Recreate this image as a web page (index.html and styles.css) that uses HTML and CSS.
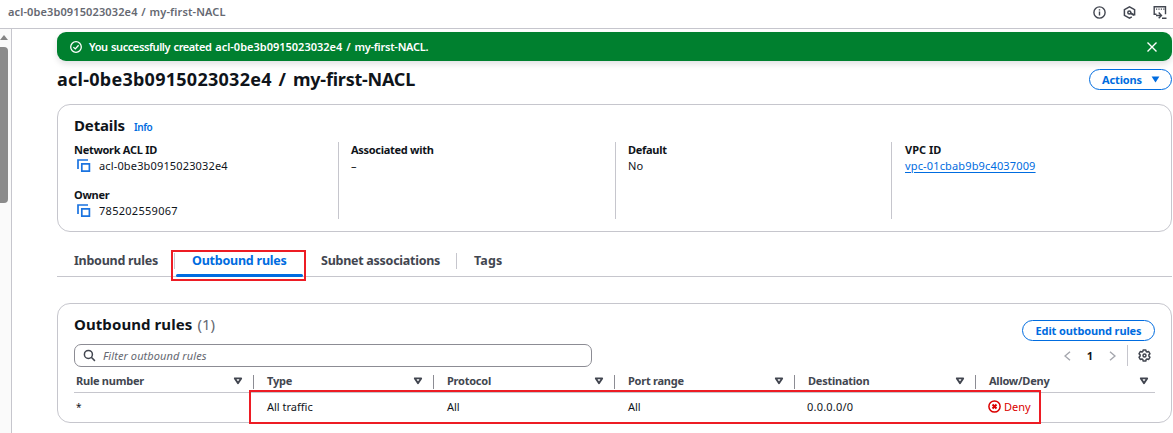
FILE: index.html
```html
<!DOCTYPE html>
<html lang="en">
<head>
<meta charset="utf-8">
<title>my-first-NACL</title>
<link rel="stylesheet" href="styles.css">
</head>
<body>
<svg width="0" height="0" class="defs">
  <symbol id="copy" viewBox="0 0 14 14"><path d="M1 10V1h10M4.8 4.8h7.6v7.4H4.8z" fill="none" stroke="currentColor" stroke-width="1.7"/></symbol>
  <symbol id="sort" viewBox="0 0 8 7"><path d="M1.2 1.200h5.6L4 5.4z" fill="none" stroke="currentColor" stroke-width="1.600" stroke-linejoin="round"/></symbol>
</svg>
<header class="topbar">
  <span class="crumb">acl-0be3b0915023032e4 / my-first-NACL</span>
  <div class="tools">
    <svg width="13" height="13" viewBox="0 0 13 13" fill="none" stroke="currentColor" stroke-width="1.4"><circle cx="6.5" cy="6.5" r="5.6"/><path d="M6.5 5.6v4M6.5 3.2v1.3"/></svg>
    <svg width="13" height="13" viewBox="0 0 13 13" fill="none" stroke="currentColor" stroke-width="1.5"><path d="M11.6 9.4V3.700L6.500.9 1.400 3.700v5.600l5.100 2.800 2.300-1.300"/><circle cx="6.300" cy="6.500" r="1.500"/><path d="M7 6.900l4.200 2.300" stroke-width="2"/></svg>
    <svg width="14" height="13" viewBox="0 0 14 13" fill="none" stroke="currentColor" stroke-width="1.4"><path d="M3.5 8.3H1.2V.8h11.3v7.5M3 3.1h1.2m1.2 0h1.2m1.2 0H9m1.2 0h1.2M3 9.5h5M5.7 6.6l2.8 2.9-2.8 2.8M9 12.2h4.5"/></svg>
  </div>
</header>
<div class="body">
  <aside class="rail"><i class="up"></i><i class="thumb"></i></aside>
  <main class="main">
    <div class="flash">
      <svg width="12" height="12" viewBox="0 0 12 12" fill="none" stroke="currentColor" stroke-width="1.3"><circle cx="6" cy="6" r="5.3"/><path d="M3.4 6.1l1.9 1.8 3.3-3.7"/></svg>
      <span class="flash-text"><span class="msg">You successfully created</span> acl-0be3b0915023032e4 / <span class="name">my-first-NACL.</span></span>
      <svg width="10" height="10" viewBox="0 0 10 10" fill="none" stroke="currentColor" stroke-width="1.4"><path d="M.5.5l9 9m0-9l-9 9"/></svg>
    </div>
    <div class="title">
      <h1>acl-0be3b0915023032e4 / <span class="name">my-first-NACL</span></h1>
      <button class="btn actions"><span>Actions</span><svg width="9" height="7" viewBox="0 0 9 7"><path d="M.6.5h7.8L4.5 6.6z" fill="currentColor"/></svg></button>
    </div>
    <section class="card details">
      <div class="details-head"><h2>Details</h2><a class="info">Info</a></div>
      <div class="cols">
        <div class="col">
          <div class="label">Network ACL ID</div>
          <div class="value"><svg width="14" height="14"><use href="#copy"/></svg><span>acl-0be3b0915023032e4</span></div>
          <div class="label second">Owner</div>
          <div class="value"><svg width="14" height="14"><use href="#copy"/></svg><span class="owner">785202559067</span></div>
        </div>
        <div class="col"><div class="label">Associated with</div><div class="value">–</div></div>
        <div class="col"><div class="label">Default</div><div class="value">No</div></div>
        <div class="col"><div class="label vpc-label">VPC ID</div><div class="value"><a class="vpc">vpc-01cbab9b9c4037009</a></div></div>
      </div>
    </section>
    <nav class="tabs">
      <div class="tab t1"><span>Inbound rules</span></div>
      <div class="tab t2 active"><span>Outbound rules</span><i class="mark tab-mark"></i></div>
      <div class="tab t3"><span>Subnet associations</span></div>
      <div class="tab t4"><span>Tags</span></div>
    </nav>
    <section class="card rules">
      <div class="rules-head"><h2>Outbound rules</h2><span class="count">(1)</span><button class="btn edit"><span>Edit outbound rules</span></button></div>
      <div class="filter-row">
        <div class="search"><svg width="13" height="13" viewBox="0 0 13 13" fill="none" stroke="currentColor" stroke-width="1.5"><circle cx="5.400" cy="5.400" r="4"/><path d="M8.300 8.300l3.600 3.600"/></svg><span>Filter outbound rules</span></div>
        <div class="pager">
          <svg width="7" height="10" viewBox="0 0 7 10" class="chev"><path d="M6 .7L1 5l5 4.300"/></svg>
          <b>1</b>
          <svg width="7" height="10" viewBox="0 0 7 10" class="chev"><path d="M1 .7L6 5 1 9.300"/></svg>
          <i class="sep"></i>
          <svg width="13" height="13" viewBox="0 0 13 13" class="gear" fill="none" stroke="currentColor" stroke-width="1.500" stroke-linejoin="round"><path d="M5.200.9h2.600l.4 1.600.9.500 1.600-.5 1.300 2.300-1.100 1.100v1.200L12 8.200l-1.300 2.300-1.600-.5-.9.5-.4 1.600H5.200l-.4-1.600-.9-.5-1.600.5L1 8.200l1.100-1.100V5.900L1 4.800l1.300-2.300 1.600.5.900-.5z"/><circle cx="6.500" cy="6.500" r="1.500"/></svg>
        </div>
      </div>
      <div class="table">
        <div class="row head">
          <div class="cell"><span>Rule number</span><svg width="10" height="8"><use href="#sort"/></svg></div>
          <div class="cell"><span>Type</span><svg width="10" height="8"><use href="#sort"/></svg></div>
          <div class="cell"><span>Protocol</span><svg width="10" height="8"><use href="#sort"/></svg></div>
          <div class="cell"><span>Port range</span><svg width="10" height="8"><use href="#sort"/></svg></div>
          <div class="cell"><span>Destination</span><svg width="10" height="8"><use href="#sort"/></svg></div>
          <div class="cell"><span>Allow/Deny</span><svg width="10" height="8"><use href="#sort"/></svg></div>
        </div>
        <div class="row data">
          <div class="cell star">*</div><div class="cell">All traffic</div><div class="cell">All</div><div class="cell">All</div><div class="cell"><span class="dest">0.0.0.0/0</span></div>
          <div class="cell deny"><svg width="13" height="13" viewBox="0 0 13 13" fill="none" stroke="currentColor"><circle cx="6.5" cy="6.5" r="5.600" stroke-width="1.500"/><path d="M4.500 4.500l4 4m0-4l-4 4" stroke-width="2"/></svg><span>Deny</span></div>
          <i class="mark row-mark"></i>
        </div>
      </div>
    </section>
  </main>
</div>
</body>
</html>
```
FILE: styles.css
```css
* { box-sizing: border-box; }
body { margin: 0; width: 1173px; height: 433px; overflow: hidden; background: #fff; color: #0f141a; font: 11px/16px "Noto Sans", "Open Sans", sans-serif; }
h1, h2 { margin: 0; font-weight: 700; }
svg { display: block; flex: none; }
span, a, h1, h2, .label { white-space: nowrap; }
.defs { position: absolute; }
.topbar { height: 29px; border-bottom: 1px solid #c6c6cd; display: flex; align-items: center; justify-content: space-between; padding: 0 6px 4px 8px; color: #656871; }
.crumb { font-weight: 600; letter-spacing: .12px; word-spacing: .8px; }
.tools { display: flex; gap: 17px; color: #424650; }
.body { display: flex; height: 404px; }
.rail { width: 12px; border-right: 1px solid #c6c6cd; background: #fafafa; }
.up { display: block; margin: 6px 0 0 0; width: 8px; height: 5px; background: #858585; clip-path: polygon(0 100%, 50% 0, 100% 100%); }
.thumb { display: block; margin-top: 7px; width: 8px; height: 156px; background: #8b8b8b; border-radius: 0 4px 4px 0; }
.main { flex: 1; padding: 3px 1px 0 45px; display: flex; flex-direction: column; }
.flash { height: 29px; border-radius: 9px; background: #00802f; color: #fff; display: flex; align-items: center; padding: 0 15px 0 13px; box-shadow: 0 3px 6px rgba(0,7,22,.12); }
.flash-text { flex: 1; margin: 1px 0 0 7px; font-weight: 600; word-spacing: 1px; }
.flash-text .msg { letter-spacing: -.42px; }
.flash-text .name { letter-spacing: -.25px; }
.title { height: 43px; display: flex; justify-content: space-between; align-items: flex-start; padding-top: 8px; }
h1 { font-size: 18px; line-height: 22px; margin-top: -1px; letter-spacing: .26px; word-spacing: 1.8px; }
h1 .name { letter-spacing: -.22px; }
.btn { height: 21px; border: 1px solid #006ce0; border-radius: 11px; background: #fff; color: #006ce0; font: 700 11px/19px "Noto Sans", sans-serif; display: flex; align-items: center; justify-content: center; padding: 0; }
.btn span { margin-top: -1px; letter-spacing: -.12px; }
.actions { width: 83px; gap: 9px; padding-left: 1px; }
.card { border: 1px solid #c6c6cd; border-radius: 13px; }
.details { height: 128px; padding: 10px 16px 0; }
.details-head { height: 27px; display: flex; align-items: flex-start; gap: 9px; }
h2 { font-size: 15px; line-height: 20px; }
.details h2 { letter-spacing: -.15px; }
.info { font-weight: 600; font-size: 10px; line-height: 24px; letter-spacing: -.35px; color: #006ce0; }
.cols { display: grid; grid-template-columns: 264px 277px 276px 1fr; height: 77px; }
.col { border-left: 1px solid #c6c6cd; padding-left: 12px; }
.col:first-child { border: 0; padding: 0; }
.col:last-child { padding-left: 13px; }
.label { font-weight: 700; line-height: 16px; letter-spacing: -.29px; }
.vpc-label { letter-spacing: 0; }
.value { height: 16px; display: flex; align-items: center; letter-spacing: .15px; }
.value svg { margin: 0 8px 0 3px; color: #1a73e0; }
.owner { letter-spacing: .28px; }
.second { margin-top: 13px; }
.vpc { color: #006ce0; text-decoration: underline; text-underline-offset: 2px; }
.tabs { height: 45px; display: flex; align-items: flex-end; border-bottom: 1px solid #c6c6cd; font-size: 12.5px; letter-spacing: -.26px; font-weight: 700; color: #424650; }
.tab { position: relative; height: 24px; display: flex; padding-left: 17px; line-height: 17px; }
.tab + .tab::before { content: ""; position: absolute; left: 0; top: 1px; width: 1px; height: 16px; background: #c6c6cd; }
.t1 { width: 117px; }
.t2 { width: 130px; padding-left: 18px; color: #006ce0; letter-spacing: -.22px; }
.t2::after { content: ""; position: absolute; left: 2px; bottom: -1px; width: 127px; height: 3px; border-radius: 2px; background: #006ce0; }
.t3 { width: 152px; }
.t4 { padding-left: 18px; letter-spacing: .1px; }
.mark { position: absolute; border: 2px solid #ed1c24; z-index: 2; }
.tab-mark { left: -3px; top: -2px; width: 135px; height: 31px; }
.rules { margin-top: 26px; height: 120px; padding: 10px 16px 0; }
.rules h2 { letter-spacing: .08px; }
.rules-head { height: 30px; display: flex; align-items: flex-start; }
.count { margin-left: 5px; font-size: 15px; line-height: 20px; color: #656871; }
.edit { width: 133px; margin: 6px 0 0 auto; }
.edit span { margin-top: 0; }
.filter-row { height: 26px; display: flex; justify-content: space-between; align-items: flex-start; }
.search { width: 518px; height: 23px; border: 1px solid #8c8c94; border-radius: 7px; display: flex; align-items: center; padding-left: 8px; color: #656871; font-style: italic; letter-spacing: .08px; }
.search svg { color: #424650; margin-right: 7px; }
.pager { height: 23px; display: flex; align-items: center; padding-right: 4px; }
.pager b { width: 38px; text-align: center; }
.chev { fill: none; stroke: #a4a6ad; stroke-width: 1.4; }
.sep { width: 1px; height: 21px; background: #c6c6cd; margin: 0 10px 0 11px; }
.gear { color: #424650; }
.row { position: relative; display: grid; grid-template-columns: 179px 180px 181px 180px 181px 180px; }
.cell { display: flex; align-items: center; padding-left: 14px; }
.cell:first-child { padding-left: 2px; }
.head { height: 23px; border-bottom: 1px solid #c6c6cd; font-weight: 700; color: #424650; letter-spacing: -.24px; }
.head .cell { height: 21px; justify-content: space-between; padding-right: 10px; border-left: 1px solid transparent; background: linear-gradient(#8c8c94, #8c8c94) 0 5px / 1px 14px no-repeat; background-origin: border-box; padding-left: 13px; }
.head .cell:first-child { border: 0; background: none; padding-left: 2px; }
.head .cell:last-child { padding-right: 6px; }
.data { height: 27px; }
.star { font-size: 10px; }
.dest { letter-spacing: .2px; margin-left: -1px; }
.deny { color: #db0000; padding-left: 13px; }
.deny svg { margin-right: 3px; }
.row-mark { left: 175px; top: -3px; width: 792px; height: 34px; }
```
